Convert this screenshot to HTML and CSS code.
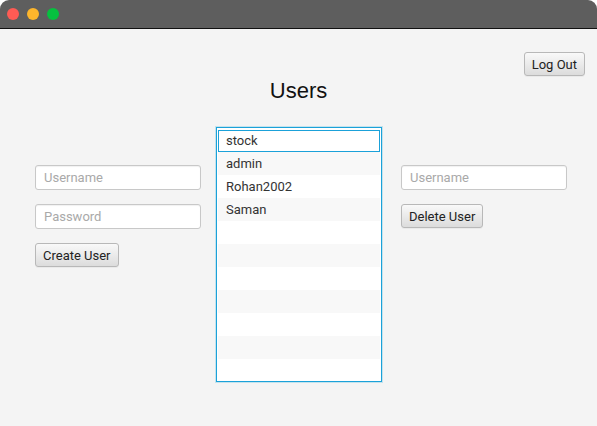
FILE: index.html
```html
<!DOCTYPE html>
<html>
<head>
<meta charset="utf-8">
<link rel="stylesheet" href="styles.css">
</head>
<body>
<div class="window">
  <div class="titlebar">
    <span class="light red"></span>
    <span class="light yellow"></span>
    <span class="light green"></span>
  </div>
  <div class="content">
    <div class="toprow">
      <button class="btn">Log Out</button>
    </div>
    <h1 class="title">Users</h1>
    <div class="main">
      <div class="col left">
        <div class="field placeholder">Username</div>
        <div class="field placeholder">Password</div>
        <button class="btn">Create User</button>
      </div>
      <div class="list">
        <div class="row focused">stock</div>
        <div class="row odd">admin</div>
        <div class="row">Rohan2002</div>
        <div class="row odd">Saman</div>
        <div class="row"></div>
        <div class="row odd"></div>
        <div class="row"></div>
        <div class="row odd"></div>
        <div class="row"></div>
        <div class="row odd"></div>
        <div class="row"></div>
      </div>
      <div class="col right">
        <div class="field placeholder">Username</div>
        <button class="btn">Delete User</button>
      </div>
    </div>
  </div>
</div>
</body>
</html>
```

FILE: styles.css
```css
html, body {
  margin: 0;
  padding: 0;
  background: #ffffff;
}
body {
  font-family: Roboto, "Liberation Sans", Arial, sans-serif;
  font-size: 13px;
  color: #333333;
}
.window {
  width: 597px;
  height: 426px;
  display: flex;
  flex-direction: column;
  border-radius: 9px 9px 0 0;
  overflow: hidden;
}
.titlebar {
  height: 28px;
  flex: none;
  background: #5e5e5e;
  border-bottom: 1px solid #111111;
  display: flex;
  align-items: center;
  gap: 8px;
  padding-left: 7px;
  box-sizing: content-box;
}
.light {
  width: 12px;
  height: 12px;
  border-radius: 50%;
  display: block;
}
.red { background: #fe5b54; }
.yellow { background: #fdb62c; }
.green { background: #06c13f; }
.content {
  flex: 1;
  background: #f4f4f4;
  padding-top: 23px;
}
.toprow {
  display: flex;
  justify-content: flex-end;
  padding-right: 12px;
}
.btn {
  display: block;
  font-family: Roboto, "Liberation Sans", Arial, sans-serif;
  font-size: 13px;
  color: #222222;
  height: 24px;
  padding: 0 7px;
  border: 1px solid #b8b8b8;
  border-radius: 3px;
  background: linear-gradient(#f9f9f9, #dcdcdc);
  box-shadow: 0 1px 0 rgba(0,0,0,0.04);
  margin: 0;
}
.col .btn {
  align-self: flex-start;
}
.title {
  margin: 2px 0 0 0;
  font-family: "Liberation Sans", Arial, sans-serif;
  font-weight: normal;
  font-size: 22px;
  line-height: 26px;
  text-align: center;
  color: #111111;
}
.main {
  display: flex;
  align-items: flex-start;
  padding-left: 35px;
  margin-top: 23px;
}
.col {
  width: 166px;
  margin-top: 38px;
  display: flex;
  flex-direction: column;
  gap: 14px;
}
.right {
  margin-left: 19px;
}
.field {
  height: 25px;
  box-sizing: border-box;
  background: #ffffff;
  border: 1px solid #c8c8c8;
  border-radius: 3px;
  box-shadow: inset 0 1px 1px rgba(0,0,0,0.06);
  padding-left: 8px;
  line-height: 23px;
}
.placeholder {
  color: #a9a9a9;
}
.list {
  margin-left: 15px;
  width: 166px;
  height: 255px;
  box-sizing: border-box;
  border: 1px solid #1ba1d9;
  box-shadow: 0 0 0 1px rgba(3,158,211,0.2), inset 0 0 0 1px #ffffff;
  background: #ffffff;
  padding: 1px;
  overflow: hidden;
}
.row {
  height: 23px;
  box-sizing: border-box;
  padding-top: 1px;
  line-height: 22px;
  padding-left: 8px;
  background: #ffffff;
  color: #333333;
}
.row.odd {
  background: #f8f8f8;
}
.row.focused {
  box-shadow: inset 0 0 0 1px #1ba1d9;
  margin: 1px 0 0 0;
  height: 22px;
  line-height: 20px;
}
```
